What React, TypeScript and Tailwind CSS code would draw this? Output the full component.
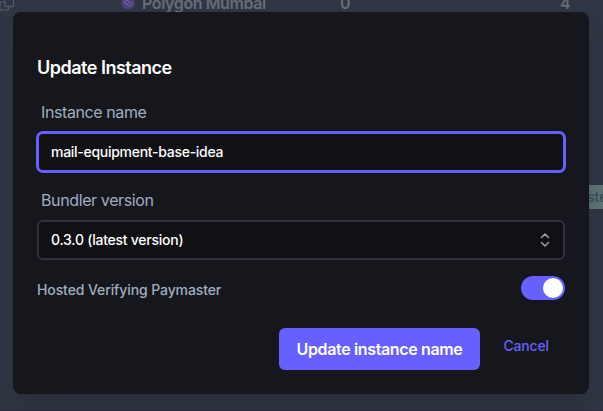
import { useState } from 'react';

function CopyIcon() {
  return (
    <svg className="h-4 w-4 shrink-0" viewBox="0 0 16 16" fill="none" stroke="currentColor" strokeWidth="1.300">
      <rect x="7" y="0.700" width="8.500" height="10.800" rx="1" />
      <path d="M7 7.200H3a1 1 0 0 0-1 1v6a1 1 0 0 0 1 1h6.500a1 1 0 0 0 1-1V11.500" />
    </svg>
  );
}

function PolygonIcon() {
  return (
    <svg className="h-[14px] w-[14px]" viewBox="0 0 14 14" fill="none">
      <circle cx="7" cy="7" r="6.600" fill="#4c3f82" />
      <path
        d="M7.900 5.300 6.100 4.200 3.600 5.300v1.900l2 1.100 1.900-1M6.300 9l1.900 1.200 2.300-1.100V7.200L8.600 6.100 6.700 7.200"
        stroke="#756d98"
        strokeWidth="0.900"
        strokeLinejoin="round"
      />
    </svg>
  );
}

function TableBehind() {
  return (
    <div className="flex h-[411px] flex-col bg-[#2f3643] text-[#656d79]">
      <div className="grid h-3 grid-cols-[121px_219px_220px_1fr] text-base leading-6 font-semibold whitespace-nowrap">
        <div className="-mt-[5px] -ml-[2px] text-[#515966]">
          <CopyIcon />
        </div>
        <div className="-mt-[9px] flex h-6 items-center gap-[7px]">
          <PolygonIcon />
          <span className="tracking-[-0.4px]">Polygon Mumbai</span>
        </div>
        <div className="-mt-[9px]">0</div>
        <div className="-mt-[9px]">4</div>
      </div>
      <div className="mt-[173px] flex flex-1 justify-end">
        <div className="h-6 w-[15px] overflow-hidden bg-[#5e7175] text-sm leading-6 font-medium whitespace-nowrap text-[#304d50]">
          <span className="-ml-px">steady</span>
        </div>
      </div>
      <div className="h-px bg-[#2c2c41]" />
    </div>
  );
}

export default function App() {
  const [name, setName] = useState('mail-equipment-base-idea');
  const [hosted, setHosted] = useState(true);

  return (
    <div className="relative h-[411px] w-[603px] overflow-hidden font-['Inter',sans-serif]">
      <TableBehind />
      <div
        role="dialog"
        className="absolute top-3 left-[13px] flex h-[382px] w-[576px] flex-col rounded-lg bg-[#16171c] px-6 pt-[42px] shadow-[0_14px_20px_-5px_rgba(22,23,28,0.25)]"
      >
        <h3 className="text-lg leading-7 font-semibold tracking-[-0.5px] text-white">Update Instance</h3>
        <label htmlFor="instance" className="mt-[18px] ml-1 text-base leading-6 tracking-[-0.4px] text-[#a0aec0]">
          Instance name
        </label>
        <input
          id="instance"
          value={name}
          onChange={(e) => setName(e.target.value)}
          className="mt-2 h-10 w-full rounded-md border-2 border-[#6560ff] bg-[#111015] px-3 pb-px text-sm font-medium tracking-[-0.28px] text-white ring-1 ring-[#6560ff] outline-none"
        />
        <span className="mt-4 ml-1 text-base leading-6 tracking-[-0.38px] text-[#a0aec0]">Bundler version</span>
        <button
          type="button"
          className="mt-2 flex h-10 w-full items-center justify-between rounded-md border-2 border-[#302f43] bg-[#111015] pr-2 pl-3 text-sm font-medium tracking-[-0.25px] text-white"
        >
          <span>0.3.0 (latest version)</span>
          <svg className="h-5 w-5" viewBox="0 0 20 20" fill="none" stroke="#9ca3af" strokeWidth="1.500" strokeLinecap="round" strokeLinejoin="round">
            <path d="M6.500 7.500 10 4l3.500 3.500M6.500 12.500 10 16l3.500-3.500" />
          </svg>
        </button>
        <div className="mt-4 flex h-6 items-center justify-between">
          <span className="pt-1 text-sm leading-5 font-medium tracking-[-0.1px] text-[#a0aec0]">Hosted Verifying Paymaster</span>
          <button
            type="button"
            role="switch"
            aria-checked={hosted}
            onClick={() => setHosted(!hosted)}
            className={hosted ? 'flex h-6 w-11 items-center justify-end rounded-full bg-[#6560ff] p-0.5' : 'flex h-6 w-11 items-center justify-start rounded-full bg-[#302f43] p-0.5'}
          >
            <span className="h-5 w-5 rounded-full bg-white" />
          </button>
        </div>
        <div className="mt-7 flex items-start justify-between pl-[242px]">
          <button type="button" className="h-[42px] w-[201px] shrink-0 rounded-md bg-[#6560ff] text-base font-semibold tracking-[-0.36px] text-white">
            Update instance name
          </button>
          <button type="button" className="mt-2 mr-4 text-sm leading-5 font-medium tracking-[-0.15px] text-[#6560ff]">
            Cancel
          </button>
        </div>
      </div>
    </div>
  );
}
